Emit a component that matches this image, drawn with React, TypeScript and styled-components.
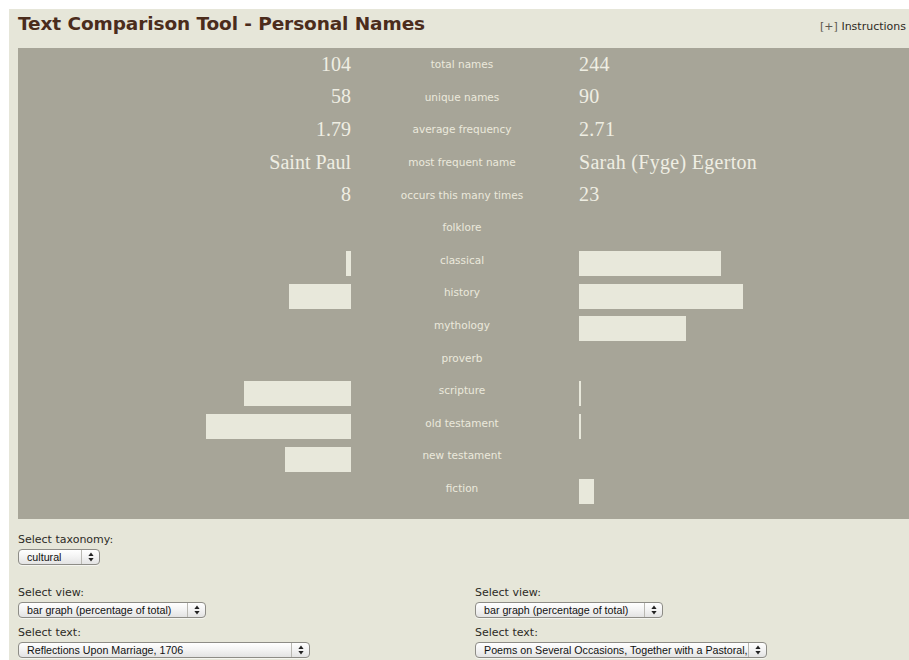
import React from "react";
import styled, { createGlobalStyle } from "styled-components";

const GlobalStyle = createGlobalStyle`
  html, body { margin: 0; padding: 0; background: #ffffff; }
  body { font-family: "DejaVu Sans", Verdana, sans-serif; }
`;

const Page = styled.div`
  margin: 9px 0 0 9px;
  background: #e6e6d9;
  padding: 0 0 4px 9px;
  min-height: 651px;
  box-sizing: border-box;
`;

const Header = styled.header`
  display: flex;
  justify-content: space-between;
  align-items: baseline;
  height: 39px;
  padding: 3px 3px 0 0;
  box-sizing: border-box;
`;

const Title = styled.h1`
  margin: 0;
  font-family: "DejaVu Sans", Verdana, sans-serif;
  font-weight: bold;
  font-size: 18.5px;
  line-height: 24px;
  color: #4b2c1c;
  letter-spacing: -0.1px;
`;

const InstructionsLink = styled.a`
  font-family: "DejaVu Sans", Verdana, sans-serif;
  font-size: 11px;
  color: #2e2a24;
  text-decoration: none;
  cursor: pointer;
`;

const Bracket = styled.span`
  color: #5c5850;
`;

const Panel = styled.section`
  background: #a7a598;
  display: grid;
  grid-template-columns: 333px 222px 1fr;
  grid-auto-rows: 32.6px;
  padding-bottom: 15px;
`;

const Value = styled.div<{ $side: "left" | "right" }>`
  font-family: "Liberation Serif", "DejaVu Serif", serif;
  font-size: 20px;
  color: #efeee3;
  display: flex;
  align-items: center;
  justify-content: ${(p) => (p.$side === "left" ? "flex-end" : "flex-start")};
  padding-left: ${(p) => (p.$side === "right" ? "6px" : "0")};
  letter-spacing: ${(p) => (p.$side === "right" ? "0.3px" : "0")};
`;

const Label = styled.div`
  font-family: "DejaVu Sans", Verdana, sans-serif;
  font-size: 10.5px;
  color: #ebe9dc;
  display: flex;
  align-items: center;
  justify-content: center;
`;

const BarCell = styled.div<{ $side: "left" | "right" }>`
  display: flex;
  align-items: flex-start;
  justify-content: ${(p) => (p.$side === "left" ? "flex-end" : "flex-start")};
  padding-left: ${(p) => (p.$side === "right" ? "6px" : "0")};
`;

const Bar = styled.div`
  height: 25px;
  margin-top: 7.5px;
  background: #e8e8db;
`;

const Controls = styled.section`
  display: grid;
  grid-template-columns: 457px 1fr;
  padding-top: 14px;
`;

const FieldGroup = styled.div<{ $gapTop?: number }>`
  display: flex;
  flex-direction: column;
  align-items: flex-start;
  margin-top: ${(p) => p.$gapTop ?? 0}px;
`;

const FieldLabel = styled.label`
  font-family: "DejaVu Sans", "Lucida Grande", sans-serif;
  font-size: 11px;
  line-height: 14px;
  color: #2d2b26;
  margin-bottom: 2px;
`;

const SelectBox = styled.div<{ $width: number }>`
  position: relative;
  width: ${(p) => p.$width}px;
  height: 16px;
  box-sizing: border-box;
  border: 1px solid #8d8c86;
  border-radius: 4px;
  background: linear-gradient(#ffffff 0%, #f4f4f4 45%, #e3e3e3 100%);
  box-shadow: 0 1px 0 rgba(255, 255, 255, 0.6);
  display: flex;
  align-items: center;
  font-family: "Liberation Sans", Arial, sans-serif;
  font-size: 10.7px;
  color: #111;
  padding-left: 8px;
  overflow: hidden;
  white-space: nowrap;
`;

const SelectText = styled.span`
  flex: 1;
  overflow: hidden;
`;

const ArrowBox = styled.span`
  width: 17px;
  height: 100%;
  border-left: 1px solid #b9b8b2;
  display: flex;
  align-items: center;
  justify-content: center;
  flex-shrink: 0;
`;

const Spacer = styled.div``;

type Row = {
  label: string;
  left?: string | number;
  right?: string | number;
};

const stats: Row[] = [
  { label: "total names", left: "104", right: "244" },
  { label: "unique names", left: "58", right: "90" },
  { label: "average frequency", left: "1.79", right: "2.71" },
  { label: "most frequent name", left: "Saint Paul", right: "Sarah (Fyge) Egerton" },
  { label: "occurs this many times", left: "8", right: "23" },
];

const bars: Row[] = [
  { label: "folklore", left: 0, right: 0 },
  { label: "classical", left: 5, right: 142 },
  { label: "history", left: 62, right: 164 },
  { label: "mythology", left: 0, right: 107 },
  { label: "proverb", left: 0, right: 0 },
  { label: "scripture", left: 107, right: 2 },
  { label: "old testament", left: 145, right: 2 },
  { label: "new testament", left: 66, right: 0 },
  { label: "fiction", left: 0, right: 15 },
];

function Arrows() {
  return (
    <svg width="6" height="10" viewBox="0 0 6 10">
      <path d="M3 0.5 L5.6 4 L0.4 4 Z" fill="#222" />
      <path d="M3 9.5 L5.6 6 L0.4 6 Z" fill="#222" />
    </svg>
  );
}

function Select({ width, value }: { width: number; value: string }) {
  return (
    <SelectBox $width={width} role="combobox">
      <SelectText>{value}</SelectText>
      <ArrowBox>
        <Arrows />
      </ArrowBox>
    </SelectBox>
  );
}

function BarValue({ side, width }: { side: "left" | "right"; width: number }) {
  return (
    <BarCell $side={side}>
      {width > 0 && <Bar style={{ width }} />}
    </BarCell>
  );
}

export default function App() {
  return (
    <>
      <GlobalStyle />
      <Page>
        <Header>
          <Title>Text Comparison Tool - Personal Names</Title>
          <InstructionsLink>
            <Bracket>[+]</Bracket> Instructions
          </InstructionsLink>
        </Header>

        <Panel>
          {stats.map((r) => (
            <React.Fragment key={r.label}>
              <Value $side="left">{r.left}</Value>
              <Label>{r.label}</Label>
              <Value $side="right">{r.right}</Value>
            </React.Fragment>
          ))}
          {bars.map((r) => (
            <React.Fragment key={r.label}>
              <BarValue side="left" width={Number(r.left)} />
              <Label>{r.label}</Label>
              <BarValue side="right" width={Number(r.right)} />
            </React.Fragment>
          ))}
        </Panel>

        <Controls>
          <FieldGroup>
            <FieldLabel>Select taxonomy:</FieldLabel>
            <Select width={82} value="cultural" />
          </FieldGroup>
          <Spacer />

          <FieldGroup $gapTop={21}>
            <FieldLabel>Select view:</FieldLabel>
            <Select width={188} value="bar graph (percentage of total)" />
          </FieldGroup>
          <FieldGroup $gapTop={21}>
            <FieldLabel>Select view:</FieldLabel>
            <Select width={188} value="bar graph (percentage of total)" />
          </FieldGroup>

          <FieldGroup $gapTop={8}>
            <FieldLabel>Select text:</FieldLabel>
            <Select width={292} value="Reflections Upon Marriage, 1706" />
          </FieldGroup>
          <FieldGroup $gapTop={8}>
            <FieldLabel>Select text:</FieldLabel>
            <Select width={292} value="Poems on Several Occasions, Together with a Pastoral," />
          </FieldGroup>
        </Controls>
      </Page>
    </>
  );
}
